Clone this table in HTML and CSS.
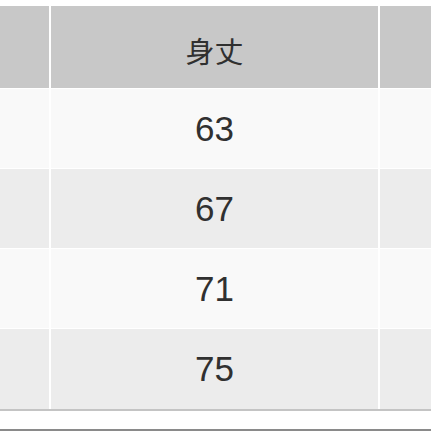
FILE: index.html
```html
<!DOCTYPE html>
<html lang="ja">
<head>
<meta charset="utf-8">
<link rel="stylesheet" href="styles.css">
</head>
<body>
<div class="page">
  <div class="size-table">
    <div class="cell head"></div>
    <div class="cell head label">身丈</div>
    <div class="cell head"></div>

    <div class="cell odd"></div>
    <div class="cell odd num">63</div>
    <div class="cell odd"></div>

    <div class="cell even"></div>
    <div class="cell even num">67</div>
    <div class="cell even"></div>

    <div class="cell odd"></div>
    <div class="cell odd num">71</div>
    <div class="cell odd"></div>

    <div class="cell even"></div>
    <div class="cell even num">75</div>
    <div class="cell even"></div>
  </div>
  <div class="rule"></div>
  <div class="spacer"></div>
  <div class="rule dark"></div>
</div>
</body>
</html>
```
FILE: styles.css
```css
html, body {
  margin: 0;
  padding: 0;
  background: #ffffff;
}
.page {
  width: 431px;
  height: 431px;
  overflow: hidden;
  padding-top: 6px;
  box-sizing: border-box;
  display: flex;
  flex-direction: column;
}
.size-table {
  display: grid;
  grid-template-columns: 49px 327px 1fr;
  grid-template-rows: 82px 79px 79px 79px 80px;
  column-gap: 2px;
  row-gap: 1px;
  background: #ffffff;
}
.cell {
  display: flex;
  align-items: center;
  justify-content: center;
  color: #303030;
}
.head { background: #c8c8c8; }
.odd { background: #f9f9f9; }
.even { background: #ececec; }
.label {
  font-family: "Noto Sans CJK JP", "Noto Sans", sans-serif;
  font-size: 29px;
  padding-top: 5px;
  box-sizing: border-box;
}
.num {
  font-family: "Liberation Sans", Arial, sans-serif;
  font-size: 35px;
}
.rule {
  height: 2px;
  background: #c4c4c4;
}
.spacer {
  height: 19px;
}
.rule.dark {
  height: 2px;
  background: #8a8a8a;
}
```
